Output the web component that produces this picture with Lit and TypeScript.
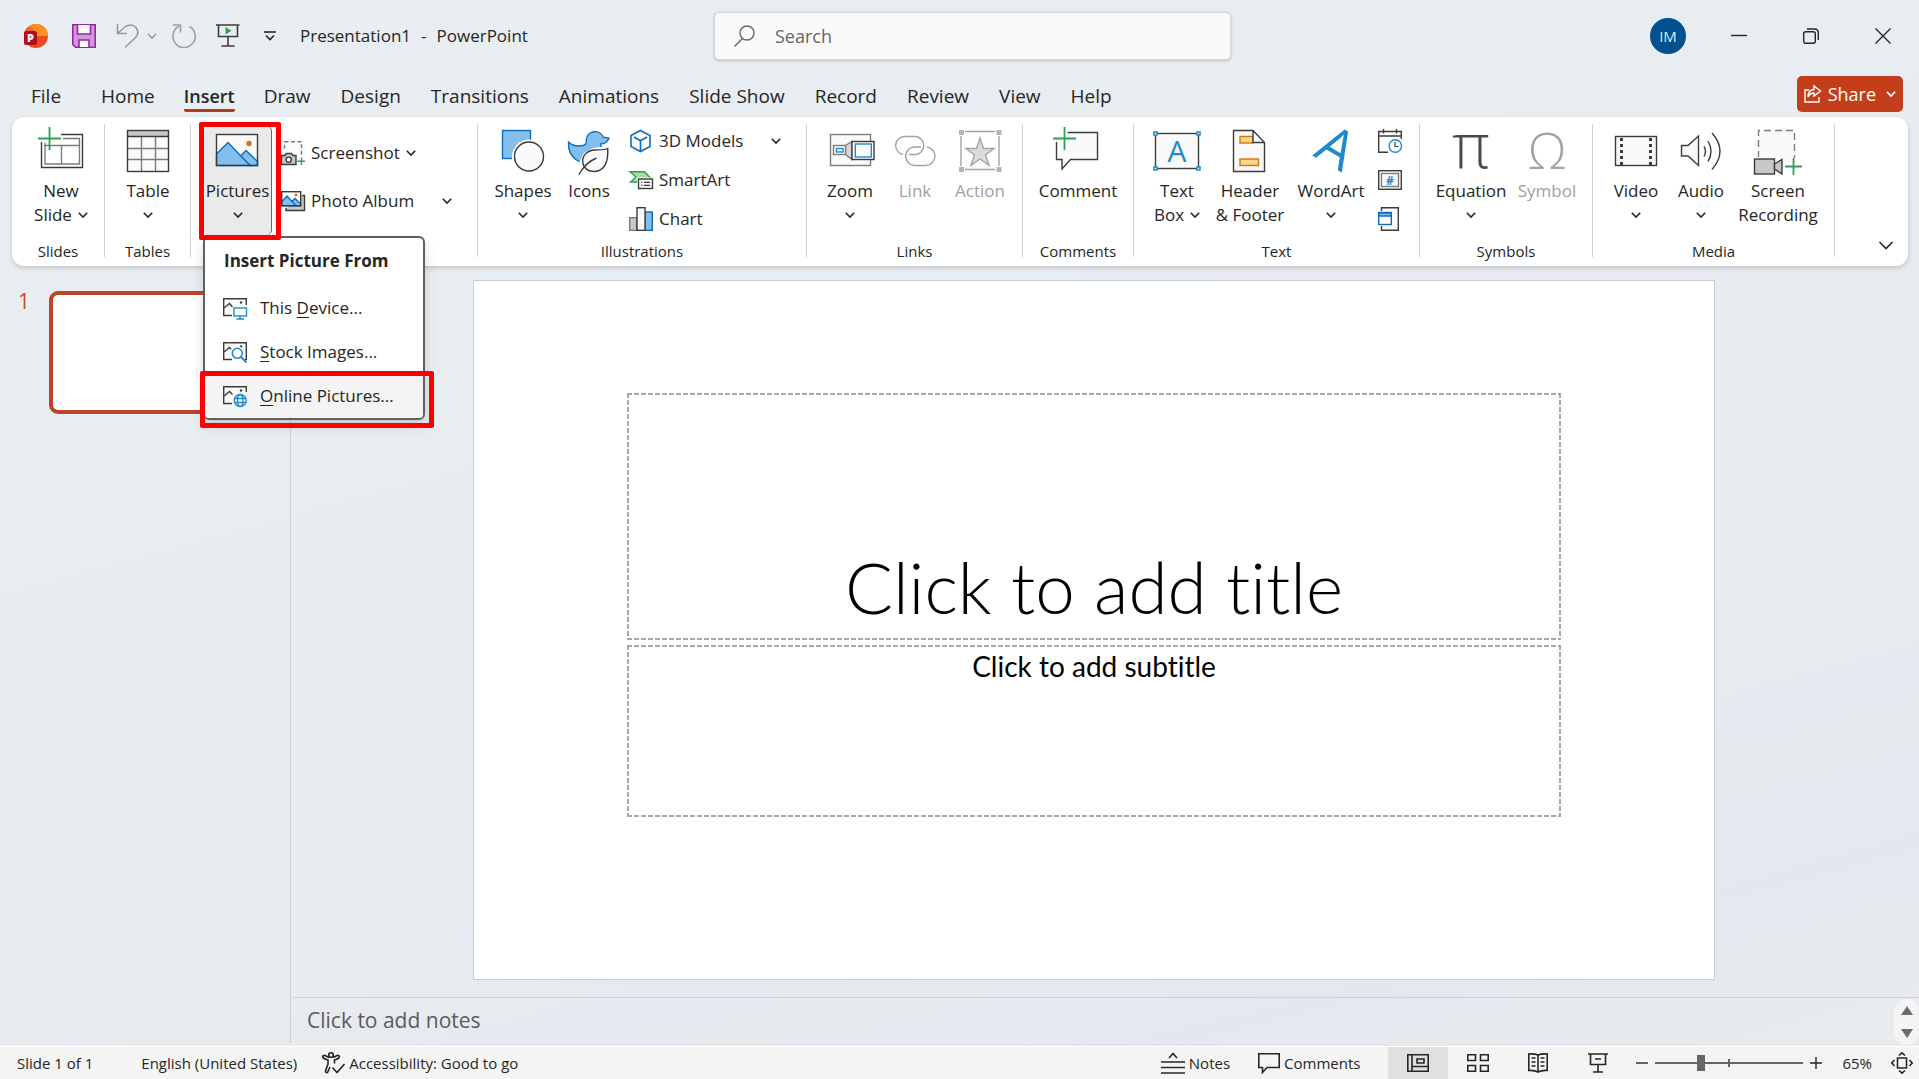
import { LitElement, html, css, svg, nothing, TemplateResult } from "lit";
import { customElement, property } from "lit/decorators.js";

const DK = "#3b3b3b";
const GY = "#7c7c7c";
const OFF = "#a3a3a3";
const BL = "#1e8bcd";
const BD = "#0f6cbd";
const BF = "#83beec";
const GR = "#2ea04f";
const OR = "#d8720b";
const PALE = "#fafafa";

const icon = (w: number, h: number, body: unknown) =>
  html`<svg width=${w} height=${h} viewBox="0 0 ${w} ${h}" fill="none" stroke-width="1.4" aria-hidden="true">${body}</svg>`;

const big: Record<string, unknown> = {
  newSlide: svg`
    <path d="M24 8.5H45.5V41.5H4.5V16" stroke=${DK}/>
    <path d="M26 12.5H42.5V38H8V17M7 19.5H42.5M24.5 19.5V38" stroke=${GY}/>
    <path d="M12.5 1V24M1 12.5H24" stroke=${GR} stroke-width="1.8"/>`,
  table: svg`
    <rect x="3.5" y="4.5" width="41" height="41" fill=${PALE}/>
    <rect x="3.5" y="4.5" width="41" height="6" fill="#c8c8c8"/>
    <path d="M3.5 22.5H44.5M3.5 33.5H44.5M17.5 10.5V45.5M31.5 10.5V45.5" stroke=${GY}/>
    <path d="M3.5 10.5H44.5" stroke=${DK}/>
    <rect x="3.5" y="4.5" width="41" height="41" stroke=${DK}/>`,
  pictures: svg`
    <rect x="2.5" y="8.5" width="41" height="31" fill=${PALE}/>
    <path d="M26.5 30L32 24.5L43.5 35.5V39.5H36Z" fill=${BF} stroke=${BD}/>
    <path d="M2.5 28L14 16.5L36 39.5H2.5Z" fill=${BF} stroke=${BD}/>
    <circle cx="35" cy="17.5" r="2.7" fill="#e36c0a"/>
    <rect x="2.5" y="8.5" width="41" height="31" stroke=${DK}/>`,
  shapes: svg`
    <rect x="3.5" y="4.5" width="28" height="28" fill=${BF} stroke=${BD}/>
    <circle cx="30" cy="30.5" r="17" fill="#fff"/>
    <circle cx="30" cy="30.5" r="14.5" fill=${PALE} stroke=${DK}/>`,
  icons: svg`
    <path d="M3.5 16C7 19.5 13 20.5 18 19.5C22 18.5 21.5 16 21.3 13.5A8.8 8.8 0 0 1 38.2 11.2L44 12C42.5 16 39.5 18 35.5 18C37 22 37 27 33 31.5C28 37 18 38.5 11.5 34C5 29.5 3 23 3.5 16Z" fill=${BF} stroke=${BD}/>
    <path d="M44 20L45 32L40 45L28 48H12L15 35L19 27L28 22Z" fill="#fff"/>
    <path d="M42.7 22.5C39 24.5 34 23.5 29 24C21 25 17 30.5 17.8 36.5C18.5 42.5 23.5 45.7 29.5 45.5C39.5 45 43.5 36 42.7 22.5Z" fill=${PALE} stroke=${DK}/>
    <path d="M14 48.5C18 41 23 35.5 31.5 32" stroke=${DK}/>`,
  zoom: svg`
    <rect x="4.5" y="8.5" width="40" height="31" fill=${PALE} stroke=${GY}/>
    <path d="M19.5 19.5L26 15.5V33.5L19.5 28.5Z" fill="#d8d8d8" stroke=${GY}/>
    <rect x="7.5" y="19.5" width="12" height="9" fill="#fff" stroke=${GY}/>
    <rect x="10.5" y="22.5" width="6.5" height="3.5" stroke=${BL}/>
    <rect x="26" y="15.5" width="22" height="18" fill="#fff" stroke=${DK}/>
    <rect x="29.3" y="18" width="16" height="13" fill=${PALE} stroke=${BL}/>`,
  link: svg`<g stroke=${OFF}>
    <path d="M12 28.5A9.1 9.1 0 0 1 13 10.5H25A9.1 9.1 0 0 1 25 28.5H18"/>
    <path d="M36 21A9.3 9.3 0 0 1 35 39.5H23A9.3 9.3 0 0 1 23 21H30"/></g>`,
  action: svg`
    <path d="M9 5.5H39M9 43.5H39M5 10V40M43 10V40" stroke=${OFF}/>
    <path d="M3 4h5v5h-5zM40.5 4h5v5h-5zM3 41h5v5h-5zM40.5 41h5v5h-5z" fill="#b5b5b5"/>
    <path d="M24 12L27.5 22.5H38L29.5 29L33 39.5L24 33L15 39.5L18.5 29L10 22.5H20.5Z" fill="#dcdcdc" stroke=${OFF}/>`,
  comment: svg`
    <path d="M13.5 6.5H43.5V33.5H16.5L8 43V33.5H2.5V16" fill=${PALE} stroke=${DK}/>
    <path d="M10.5 1V24M-1 12.5H22" stroke="#fff" stroke-width="5"/>
    <path d="M10.5 1V24M-1 12.5H22" stroke=${GR} stroke-width="1.8"/>`,
  textBox: svg`
    <rect x="2.5" y="7.5" width="43" height="35" fill=${PALE} stroke=${DK}/>
    <path d="M1 6h3v3h-3zM44 6h3v3h-3zM1 41h3v3h-3zM44 41h3v3h-3z" fill="#fff" stroke=${BL} stroke-width="1.6"/>
    <text x="24" y="36" text-anchor="middle" font-size="30" fill=${BL}>A</text>`,
  header: svg`
    <path d="M7.5 4.5H27L38.5 16.5V45.5H7.5Z" fill=${PALE}/>
    <rect x="14" y="10.5" width="13" height="6.5" fill="#f8d88c" stroke=${OR}/>
    <path d="M27 4.5L38.5 16.5H27Z" fill=${PALE}/>
    <path d="M7.5 4.5H27L38.5 16.5V45.5H7.5ZM27 4.5V16.5H38.5" stroke=${DK}/>
    <rect x="14" y="33" width="18.5" height="6.5" fill="#f8d88c" stroke=${OR}/>`,
  wordArt: svg`<text x="20" y="38" text-anchor="middle" font-size="54" fill=${BL} transform="rotate(30 20 38)">A</text>`,
  equation: svg`<text x="24" y="42" text-anchor="middle" font-size="62" fill="#4a4a4a" font-weight="300">π</text>`,
  symbol: svg`<text x="24" y="43" text-anchor="middle" font-size="50" fill=${OFF} font-weight="300">Ω</text>`,
  video: svg`
    <rect x="3.5" y="10.5" width="41" height="29" fill=${PALE} stroke=${DK}/>
    <path d="M9.5 12V39M38.5 12V39" stroke=${DK} stroke-width="3" stroke-dasharray="3 3"/>`,
  audio: svg`
    <path d="M4.5 19.5H11L21.5 10V39.5L11 30H4.5Z" fill=${PALE} stroke=${DK}/>
    <path d="M27 20.5Q30 25 27 30.5M31 15Q37 25 31 35.5M35 7Q51 25 35 43.5" stroke=${DK}/>`,
  screenRec: svg`
    <rect x="4.5" y="4.5" width="36" height="36" fill=${PALE}/>
    <path d="M4.5 32V4.5H40.5V32" stroke=${GY} stroke-dasharray="7 4"/>
    <path d="M-1 31H30V50H-1zM30 36H42V46H30z" fill="#fff"/>
    <rect x=".5" y="33" width="20" height="15" fill="#c8c8c8" stroke=${DK}/>
    <path d="M20.5 38L28 33.5V48L20.5 43Z" fill="#c8c8c8" stroke=${DK}/>
    <path d="M39.5 32V49M31 40.5H48" stroke=${GR} stroke-width="1.8"/>`,
};

const small: Record<string, unknown> = {
  screenshot: svg`
    <rect x="3.5" y=".7" width="17" height="19" stroke=${GY} stroke-dasharray="4 2.5" fill=${PALE}/>
    <path d="M-1 10H17V24H-1zM14 14H24V24H14z" fill="#fff"/>
    <path d="M.5 14.5H4L5.5 12.5H10.5L12 14.5H15V23.5H.5Z" fill="#c8c8c8" stroke=${DK}/>
    <circle cx="7.7" cy="18.7" r="2.6" fill="#fff" stroke=${DK}/>
    <path d="M20.5 16.5V24M16.5 20.3H24" stroke=${GR}/>`,
  album: svg`
    <path d="M21 6.5H23.5V21.5H5V19" stroke=${DK} fill="#c8c8c8"/>
    <rect x=".7" y="2.7" width="19" height="14" fill=${PALE}/>
    <path d="M.7 13L6 7L15 16.7H.7ZM11 12.5L14 9.5L19.7 15V16.7H15Z" fill=${BF} stroke=${BD}/>
    <circle cx="15" cy="6" r="1.4" fill="#e36c0a"/>
    <rect x=".7" y="2.7" width="19" height="14" stroke=${DK}/>`,
  cube: svg`
    <path d="M11.5 1.5L21 6.5V17.5L11.5 22.5L2 17.5V6.5Z" fill=${PALE} stroke=${BD} stroke-width="1.6"/>
    <path d="M5 8L11.5 11.7V22M11.5 11.7L18 8" stroke=${BD} stroke-width="1.6"/>`,
  smartArt: svg`
    <path d="M1 3.7H15.5L22 10.5L16 14H1.5L7 9Z" fill="#a6dca8" stroke=${GR}/>
    <rect x="8" y="9.5" width="16" height="12" fill="#fff"/>
    <rect x="9.5" y="11" width="14" height="9.5" fill=${PALE} stroke=${DK}/>
    <path d="M12 14.3H13.3M15 14.3H21M12 17.3H13.3M15 17.3H21" stroke=${DK} stroke-width="1.2"/>`,
  chart: svg`
    <rect x=".7" y="10.7" width="7" height="12.6" fill="#c8c8c8" stroke=${GY}/>
    <rect x="16" y="5" width="7.3" height="18.3" fill=${BF} stroke=${BD}/>
    <rect x="8" y=".7" width="8" height="22.6" fill=${PALE} stroke=${DK}/>`,
  date: svg`
    <path d="M10 23.3H.7V2.5H23.3V10M.7 7H23.3M5.5 0V4.5M18.5 0V4.5" stroke=${DK}/>
    <circle cx="17.3" cy="17" r="6.2" fill="#fff" stroke=${BL}/>
    <path d="M17 13V17.5H20.5" stroke=${DK} stroke-width="1.2"/>`,
  number: svg`
    <rect x=".7" y="2.7" width="22.6" height="18.6" stroke=${DK} fill=${PALE}/>
    <rect x="3.5" y="5.5" width="17" height="13" stroke=${GY}/>
    <text x="12" y="16.5" text-anchor="middle" font-size="12" font-weight="700" fill=${BL}>#</text>`,
  object: svg`
    <path d="M3.5 4V.7H20.3V23.3H3.5V19" stroke=${DK} fill=${PALE}/>
    <rect x=".7" y="5.5" width="12.6" height="12" fill="#fff" stroke=${BD}/>
    <path d="M.7 6H13.3V9H.7Z" fill=${BF} stroke=${BD}/>`,
  device: svg`
    <path d="M9 19.5H.7V2.7H23.3V9" fill=${PALE} stroke=${DK}/><path d="M1 12L6.5 7.5L9.5 11" stroke=${DK}/>
    <circle cx="18" cy="6.5" r="1.2" fill=${DK}/>
    <rect x="11" y="12" width="12.5" height="8" fill="#fff" stroke=${BL}/><path d="M17 20V23M13.5 23H21" stroke=${BL}/>`,
  stock: svg`
    <path d="M9 19.5H.7V2.7H23.3V19.5H22" fill=${PALE} stroke=${DK}/><path d="M1 12L6.5 7.5L9 10" stroke=${DK}/>
    <circle cx="18" cy="6.5" r="1.2" fill=${DK}/>
    <circle cx="14" cy="13" r="7" fill="#fff"/><circle cx="14.3" cy="13.3" r="5" stroke=${BL} stroke-width="1.6"/><path d="M18 17L23.5 22.5" stroke=${BL} stroke-width="1.8"/>`,
  online: svg`
    <path d="M9 19.5H.7V2.7H23.3V8" fill=${PALE} stroke=${DK}/><path d="M1 12L6.5 7.5L9.5 10.5" stroke=${DK}/>
    <circle cx="18" cy="6.5" r="1.2" fill=${DK}/>
    <g stroke=${BL}><circle cx="17.2" cy="16.5" r="6" fill="#fff"/><ellipse cx="17.2" cy="16.5" rx="2.7" ry="6"/><path d="M11.5 14.5H23M11.5 18.5H23"/></g>`,
};

const chev = html`<svg class="chev" width="10" height="6" viewBox="0 0 10 6" fill="none" stroke="currentColor" stroke-width="1.6" aria-hidden="true"><path d="M.8.8L5 5L9.2.8"/></svg>`;

const shared = css`
  * { box-sizing: border-box; }
  button, input, h1, p { margin: 0; padding: 0; border: 0; background: none; font: inherit; color: inherit; }
  svg { display: block; flex: none; overflow: visible; font-family: "Open Sans", sans-serif; }
  input::placeholder { color: inherit; opacity: 1; }
`;

@customElement("ribbon-group")
class RibbonGroup extends LitElement {
  @property() label = "";
  static styles = [shared, css`
    :host { display: flex; flex: none; flex-direction: column; border-right: 1px solid #d1d1d1; }
    .body { flex: 1; display: flex; align-items: flex-start; }
    .label { text-align: center; font-size: 15px; line-height: 16px; margin-bottom: -2px; min-height: 16px; }
  `];
  render() {
    return html`<div class="body"><slot></slot></div><div class="label">${this.label}</div>`;
  }
}

@customElement("app-root")
class AppRoot extends LitElement {
  static styles = [shared, css`
    :host { display: flex; flex-direction: column; min-height: 100vh; color: #262626; font-family: "Open Sans", "Noto Sans", sans-serif; font-size: 17px; line-height: 24px;
      background: linear-gradient(165deg, #e8eef1 0%, #e8edf1 35%, #e8ebf0 65%, #e4e8ee 85%, #e8ecf0 100%); }

    .titlebar { display: grid; grid-template-columns: minmax(540px, 714fr) minmax(200px, 517fr) minmax(280px, 688fr); height: 72px; align-items: center; }
    .quick { display: flex; align-items: center; gap: 20px; padding-left: 24px; white-space: nowrap; }
    .quick button { display: flex; align-items: center; justify-content: center; min-width: 24px; height: 28px; }
    .brand { margin-right: 4px; }
    .split { display: flex; gap: 7px; margin-right: -5px; color: #9a9a9a; }
    .split button:last-child { min-width: 9px; }
    .quick .custom { width: 20px; min-width: 20px; }
    .doc { display: flex; gap: 10px; }
    .search { display: flex; align-items: center; gap: 20px; height: 48px; padding: 0 19px; border-radius: 5px; background: #fafafa; border: 1px solid #d6d8da; box-shadow: 0 1px 3px #00000038; color: #666; font-size: 18px; }
    .search input { flex: 1; min-width: 0; }
    .win { display: flex; justify-content: flex-end; align-items: center; }
    .avatar { width: 36px; height: 36px; border-radius: 50%; background: #00508f; color: #dbe9f5; font-size: 15px; margin-right: 17px; }
    .win .ctl { width: 72px; height: 48px; display: flex; justify-content: center; align-items: center; }

    .tabs { display: flex; align-items: flex-start; height: 45px; padding: 0 16px; font-size: 19px; }
    .tabs nav { display: flex; padding-top: 12px; flex: 1; }
    .tab { padding: 0 15px; color: inherit; text-decoration: none; white-space: nowrap; }
    .tab:first-child { margin-right: 10px; }
    .tab span { display: block; padding-bottom: 1px; border-bottom: 3px solid transparent; }
    .tab.on { padding: 0 14px; font-size: 18px; font-weight: 600; }
    .tab.on span { border-color: #b7371c; border-radius: 0 0 2px 2px; }
    .share { display: flex; align-items: center; gap: 6px; height: 36px; margin-top: 4px; padding: 0 7px; border-radius: 5px; background: #c43e1c; color: #fff; font-size: 18px; }
    .share .chev { margin-left: 4px; }

    .ribbon { position: relative; z-index: 2; display: flex; height: 149px; margin: 0 11px 0 12px; padding: 7px 0 9px; border-radius: 12px; background: #fff; box-shadow: 0 2px 5px #0000002e; }
    .big { display: flex; flex-direction: column; align-items: center; gap: 5px; height: 109px; margin-top: 2px; border-radius: 5px; white-space: nowrap; line-height: 24px; }
    .big .two { display: flex; flex-direction: column; align-items: center; }
    .big .line { display: flex; align-items: center; gap: 6px; height: 24px; }
    .off { color: #a0a0a0; }
    .w60 { width: 60px; } .w64 { width: 64px; } .w66 { width: 66px; } .w68 { width: 68px; } .w76 { width: 76px; } .w86 { width: 86px; } .w88 { width: 88px; }
    .pad { padding-left: 11px; }
    .pad.more-pad { padding-left: 13px; }
    .open { background: #eaeaea; border-right: 1px solid #666; }
    .col { display: flex; flex-direction: column; gap: 5px; padding-left: 6px; }
    .col.wide { gap: 14px; padding: 12px 0 0 9px; }
    .col.tight { padding-left: 9px; }
    .row { display: flex; align-items: center; gap: 6px; height: 34px; white-space: nowrap; }
    .row button { display: flex; align-items: center; gap: 6px; }
    .row .more { margin-left: 22px; height: 24px; }
    .g1 { width: 93px; } .g2 { width: 86px; } .g3 { width: 287px; } .g4 { width: 329px; } .g5 { width: 216px; } .g6 { width: 111px; } .g7 { width: 286px; } .g8 { width: 173px; } .g9 { width: 242px; }
    .collapse { margin: auto 15px 3px auto; padding: 4px 0; }

    .anchor { position: relative; margin-left: 2px; }
    .mark { position: absolute; border: 5px solid #fe0000; border-radius: 2px; pointer-events: none; }
    .mark.a { inset: -2px -9px -5px -5px; }
    .mark.b { inset: auto -11px -10px -5px; height: 57px; }
    .menu { position: absolute; top: 112px; left: -1px; width: 222px; padding: 8px 0 0; border: 2px solid #606060; border-radius: 6px; background: #fff; box-shadow: 0 6px 12px #00000026; }
    .menu h1 { padding: 3px 19px 13px; font-size: 17px; font-weight: 700; line-height: 24px; white-space: nowrap; }
    .item { display: flex; align-items: center; gap: 13px; width: 100%; height: 44px; padding: 0 18px; white-space: nowrap; }
    .item.hot { background: #f4f4f4; border-radius: 0 0 4px 4px; }
    u { text-underline-offset: 3px; text-decoration-thickness: 1px; }

    .work { flex: 1; display: grid; grid-template-columns: 291px minmax(0, 1fr); min-height: 0; }
    .thumbs { display: flex; align-items: flex-start; gap: 22px; margin-bottom: 3px; padding: 25px 0 0 18px; border-right: 1px solid #cfd1d2; color: #d14a2b; font-size: 21px; }
    .thumbs span { width: 9px; margin-top: -2px; }
    .thumb { width: 216px; height: 123px; border: 4px solid #b7472a; border-radius: 9px; background: #fff; }
    .main { display: grid; grid-template-rows: minmax(0, 1fr) 49px; }
    .canvas { display: flex; justify-content: center; padding: 14px 22px 17px 0; }
    .slide { height: 100%; aspect-ratio: 1242 / 700; border: 1px solid #c9cbcd; background: #fff; color: #000; font-family: Lato, "Open Sans", sans-serif; font-variant-ligatures: none; display: grid; grid-template-columns: 153fr 934fr 153fr; grid-template-rows: 112fr 247fr 5fr 172fr 162fr; }
    .ph { grid-column: 2; display: flex; min-width: 0; --h: repeating-linear-gradient(90deg, #a8a8a8 0 5px, #fff 5px 7px); --v: repeating-linear-gradient(#a8a8a8 0 5px, #fff 5px 7px);
      background: var(--h) 0 0 / 100% 2px no-repeat, var(--h) 0 100% / 100% 2px no-repeat, var(--v) 0 0 / 2px 100% no-repeat, var(--v) 100% 0 / 2px 100% no-repeat; }
    .ph input { width: 100%; text-align: center; }
    .ph.t { grid-row: 2; align-items: flex-end; padding-bottom: 12px; }
    .ph.t input { font-size: 71px; font-weight: 300; height: 84px; }
    .ph.s { grid-row: 4; align-items: flex-start; padding-top: 3px; }
    .ph.s input { font-size: 28px; height: 36px; }
    .notes { display: flex; align-items: center; border-top: 1px solid #cfd1d2; margin-left: 2px; padding-left: 14px; color: #5c5c5c; font-size: 21px; }
    .notes input { flex: 1; height: 30px; margin-top: -4px; }
    .pager { display: flex; flex-direction: column; align-items: center; justify-content: space-around; width: 25px; height: 46px; border-radius: 12px; background: #f4f4f4; }

    .status { display: flex; align-items: center; height: 33px; border-top: 1px solid #fff; background: #f4f4f4; font-size: 15px; padding-left: 17px; white-space: nowrap; }
    .status button { display: flex; align-items: center; height: 32px; }
    .grow { flex: 1; }
    .lang { margin: 0 25px 0 48px; }
    .acc, .st { gap: 4px; }
    .st.c { margin: 0 28px; }
    .status .view { width: 60px; justify-content: center; }
    .view.on { background: #e0e0e0; }
    .zoom { display: flex; align-items: center; gap: 7px; margin-left: 8px; }
    .track { position: relative; display: flex; }
    .tick { position: absolute; left: 73px; top: 4px; width: 2px; height: 8px; background: #666; }
    .range { -webkit-appearance: none; appearance: none; width: 148px; height: 16px; background: linear-gradient(#666, #666) center / 100% 2px no-repeat; }
    .range::-webkit-slider-thumb { -webkit-appearance: none; width: 8px; height: 16px; background: #666; }
    .pct { margin-left: 20px; } .fit { margin: 0 6px 0 19px; }
  `];

  private tabs = ["File", "Home", "Insert", "Draw", "Design", "Transitions", "Animations", "Slide Show", "Record", "Review", "View", "Help"];

  private big(name: string, cls: string, a: string, b: string | null = null, arrow = false): TemplateResult {
    return html`<button class="big ${cls}" ?disabled=${cls.includes("off")}>${icon(48, 48, big[name])}
      <span class="two"><span class="line">${a}</span>
        ${b || arrow ? html`<span class="line">${b ?? nothing}${arrow ? chev : nothing}</span>` : nothing}</span></button>`;
  }

  private row(name: string, text: string, arrow = "") {
    return html`<div class="row"><button aria-label=${text || name}>${icon(24, 24, small[name])}${text ? html`<span>${text}</span>` : nothing}${arrow === "in" ? chev : nothing}</button>${
      arrow === "out" ? html`<button class="more" aria-label="More">${chev}</button>` : nothing}</div>`;
  }

  private titleBar() {
    return html`<header class="titlebar">
      <div class="quick">
        <span class="brand">${icon(24, 24, svg`
          <circle cx="12" cy="12" r="12" fill="#ed4a22"/><path d="M12 0A12 12 0 0 1 24 12H12Q9 4 12 0Z" fill="#ff9224"/>
          <path d="M0 12A12 12 0 0 1 12 0V12Z" fill="#f4632f"/><path d="M5 2.3Q8 0 12 0Q18 0 21 4L12 11Q12 6 5 2.3Z" fill="#ff8f22"/>
          <rect x="0" y="7" width="13" height="14" rx="2" fill="#b30b1c"/>
          <text x="6.5" y="18" text-anchor="middle" font-size="11" font-weight="800" fill="#fff">P</text>`)}</span>
        <button aria-label="Save">${icon(24, 24, svg`<path d="M.8.8H23.2V23.2H3.5L.8 20.5Z" fill="#d696dc" stroke="#9428a4" stroke-width="1.6"/><path d="M5.5 1V10H18.5V1" fill="#fafafa" stroke="#9428a4" stroke-width="1.6"/><path d="M7 23V16H17V23" fill="#fafafa" stroke="#9428a4" stroke-width="1.6"/>`)}</button>
        <span class="split"><button aria-label="Undo">${icon(24, 24, svg`<path d="M1.5 0V9.5H11M1.5 9.5L9 3A8 8 0 0 1 20 3.5Q24 8.5 19.5 13.5L9 23.5" stroke="currentColor" stroke-width="1.6"/>`)}</button><button aria-label="Undo history">${chev}</button></span>
        <button aria-label="Redo" class="off">${icon(24, 24, svg`<path d="M17.5 2.5A11.2 11.2 0 1 1 7 2.3M1 1H8.5V8.5" stroke="currentColor" stroke-width="1.6"/>`)}</button>
        <button aria-label="Start from beginning">${icon(24, 24, svg`<path d="M0 1H23.5M2.500 1V12.500H21.500V1M12 12.500V22M5.500 22H18.500" stroke=${DK} stroke-width="1.6"/><path d="M9.500 3L15.500 6.700L9.500 10.500Z" fill=${GR}/>`)}</button>
        <button aria-label="Customize Quick Access Toolbar" class="custom">${icon(12, 10, svg`<path d="M0 1H12" stroke="#262626" stroke-width="1.6"/><path d="M2 4.5L6 8.5L10 4.5" stroke="#262626" stroke-width="1.6"/>`)}</button>
        <span class="doc"><span>Presentation1</span><span>-</span><span>PowerPoint</span></span>
      </div>
      <label class="search">${icon(21, 22, svg`<circle cx="13" cy="8" r="7" stroke="#666"/><path d="M8.5 13.5L.5 21.5" stroke="#666"/>`)}<input type="text" placeholder="Search" aria-label="Search" /></label>
      <div class="win">
        <button class="avatar" aria-label="Account">IM</button>
        <button class="ctl" aria-label="Minimize">${icon(16, 16, svg`<path d="M0 7.5H16" stroke="#262626"/>`)}</button>
        <button class="ctl" aria-label="Restore">${icon(16, 16, svg`<rect x=".7" y="3.7" width="11.6" height="11.6" rx="2" stroke="#262626"/><path d="M4 1H11.5Q15.3 1 15.3 5V12" stroke="#262626"/>`)}</button>
        <button class="ctl" aria-label="Close">${icon(16, 16, svg`<path d="M.5.5L15.5 15.5M15.5.5L.5 15.5" stroke="#262626"/>`)}</button>
      </div>
    </header>
    <div class="tabs"><nav>${this.tabs.map((t) => html`<a class="tab ${t === "Insert" ? "on" : ""}" href="#"><span>${t}</span></a>`)}</nav>
      <button class="share">${icon(18, 18, svg`<path d="M5 5H1V17H15V12M10 1L16.5 6L10 11V8Q6 8 4 12Q4 5 10 4.5Z" stroke="#fff"/>`)}Share${chev}</button></div>`;
  }

  private ribbon() {
    return html`<div class="ribbon">
      <ribbon-group class="g1" label="Slides"><div class="pad"></div>${this.big("newSlide", "w76", "New", "Slide", true)}</ribbon-group>
      <ribbon-group class="g2" label="Tables"><div class="pad"></div>${this.big("table", "w64", "Table", null, true)}</ribbon-group>
      <ribbon-group class="g3" label=""><div class="pad"></div>
        <div class="anchor">${this.big("pictures", "w68 open", "Pictures", null, true)}
          <div class="menu"><h1>Insert Picture From</h1>
            <button class="item">${icon(24, 24, small.device)}<span>This <u>D</u>evice...</span></button>
            <button class="item">${icon(24, 24, small.stock)}<span><u>S</u>tock Images...</span></button>
            <button class="item hot">${icon(24, 24, small.online)}<span><u>O</u>nline Pictures...</span></button>
            <div class="mark b"></div></div>
          <div class="mark a"></div></div>
        <div class="col wide">${this.row("screenshot", "Screenshot", "in")}${this.row("album", "Photo Album", "out")}</div></ribbon-group>
      <ribbon-group class="g4" label="Illustrations"><div class="pad more-pad"></div>${this.big("shapes", "w64", "Shapes", null, true)}${this.big("icons", "w68", "Icons")}
        <div class="col">${this.row("cube", "3D Models", "out")}${this.row("smartArt", "SmartArt")}${this.row("chart", "Chart")}</div></ribbon-group>
      <ribbon-group class="g5" label="Links"><div class="pad"></div>${this.big("zoom", "w64", "Zoom", null, true)}${this.big("link", "w66 off", "Link")}${this.big("action", "w64 off", "Action")}</ribbon-group>
      <ribbon-group class="g6" label="Comments"><div class="pad"></div>${this.big("comment", "w88", "Comment")}</ribbon-group>
      <ribbon-group class="g7" label="Text"><div class="pad more-pad"></div>${this.big("textBox", "w60", "Text", "Box", true)}${this.big("header", "w86", "Header", "& Footer")}${this.big("wordArt", "w76", "WordArt", null, true)}
        <div class="col tight">${this.row("date", "")}${this.row("number", "")}${this.row("object", "")}</div></ribbon-group>
      <ribbon-group class="g8" label="Symbols"><div class="pad more-pad"></div>${this.big("equation", "w76", "Equation", null, true)}${this.big("symbol", "w76 off", "Symbol")}</ribbon-group>
      <ribbon-group class="g9" label="Media"><div class="pad"></div>${this.big("video", "w64", "Video", null, true)}${this.big("audio", "w66", "Audio", null, true)}${this.big("screenRec", "w88", "Screen", "Recording")}</ribbon-group>
      <button class="collapse" aria-label="Collapse the ribbon">${icon(14, 9, svg`<path d="M.5 1L7 7.5L13.5 1" stroke="#262626" stroke-width="1.6"/>`)}</button>
    </div>`;
  }

  private status() {
    return html`<footer class="status">
      <button>Slide 1 of 1</button><button class="lang">English (United States)</button>
      <button class="acc">${icon(23, 22, svg`<g stroke="#262626" stroke-width="1.6"><circle cx="9" cy="3" r="2.3"/><path d="M7 5.5L3 3.5Q.5 3 .7 5Q1 6.5 6 8V12L3.5 19Q3.5 21 5.5 20.5L8 15M11 5.5L15 3.5Q17.5 3 17.3 5Q17 6.5 12.5 8V11.5M10.5 15.5L15 20.5L22.5 12"/></g>`)}Accessibility: Good to go</button>
      <span class="grow"></span>
      <button class="st">${icon(24, 22, svg`<path d="M8 6L12 1.5L16 6M0 10H24M0 15.5H24M0 21H24" stroke="#262626" stroke-width="1.6"/>`)}Notes</button>
      <button class="st c">${icon(22, 20, svg`<path d="M.8.8H21.2V14.5H9L4.5 19.5V14.5H.8Z" stroke="#262626" stroke-width="1.6"/>`)}Comments</button>
      <button class="view on" aria-label="Normal">${icon(22, 18, svg`<path d="M.8.8H21.2V17.2H.8ZM5 1V17M5 12.5H21M10 5H17V9H10Z" stroke="#262626" stroke-width="1.6"/>`)}</button>
      <button class="view" aria-label="Slide Sorter">${icon(22, 18, svg`<path d="M.8.8H8.5V6.5H.8ZM13.5.8H21.2V6.5H13.5ZM.8 11.5H8.5V17.2H.8ZM13.5 11.5H21.2V17.2H13.5Z" stroke="#262626" stroke-width="1.6"/>`)}</button>
      <button class="view" aria-label="Reading View">${icon(20, 20, svg`<path d="M10 2Q6 .5.8 1V17.5Q6 17 10 19Q14 17 19.2 17.5V1Q14 .5 10 2ZM10 2V19M3.5 5H7.5M3.5 9H7.5M3.5 13H7.5M12.5 5H16.5M12.5 9H16.5M12.5 13H16.5" stroke="#262626" stroke-width="1.6"/>`)}</button>
      <button class="view" aria-label="Slide Show">${icon(20, 20, svg`<path d="M0 1H20M2.5 1V11.5H17.5V1M10 11.5V19M5 19H15M7 6H13" stroke="#262626" stroke-width="1.6"/>`)}</button>
      <div class="zoom"><button aria-label="Zoom out">${icon(12, 12, svg`<path d="M0 6H12" stroke="#262626"/>`)}</button>
        <span class="track"><span class="tick"></span><input class="range" type="range" min="0" max="100" .value=${"30"} aria-label="Zoom" /></span>
        <button aria-label="Zoom in">${icon(12, 12, svg`<path d="M0 6H12M6 0V12" stroke="#262626"/>`)}</button></div>
      <button class="pct">65%</button>
      <button class="fit" aria-label="Fit slide to window">${icon(22, 22, svg`<path d="M6.5 6H15.5V16H6.5ZM8 3.5L11 .8L14 3.5M8 18.5L11 21.2L14 18.5M3.5 8L.8 11L3.5 14M18.5 8L21.2 11L18.5 14" stroke="#262626" stroke-width="1.6"/>`)}</button>
    </footer>`;
  }

  render() {
    return html`${this.titleBar()}${this.ribbon()}
      <div class="work">
        <aside class="thumbs"><span>1</span><div class="thumb"></div></aside>
        <div class="main">
          <div class="canvas"><div class="slide">
            <div class="ph t"><input type="text" placeholder="Click to add title" aria-label="Title" /></div>
            <div class="ph s"><input type="text" placeholder="Click to add subtitle" aria-label="Subtitle" /></div>
          </div></div>
          <div class="notes"><input type="text" placeholder="Click to add notes" aria-label="Notes" />
            <div class="pager"><button aria-label="Previous slide">${icon(12, 9, svg`<path d="M6 0L12 9H0Z" fill="#6c6c6c"/>`)}</button><button aria-label="Next slide">${icon(12, 9, svg`<path d="M6 9L12 0H0Z" fill="#6c6c6c"/>`)}</button></div></div>
        </div>
      </div>${this.status()}`;
  }
}
